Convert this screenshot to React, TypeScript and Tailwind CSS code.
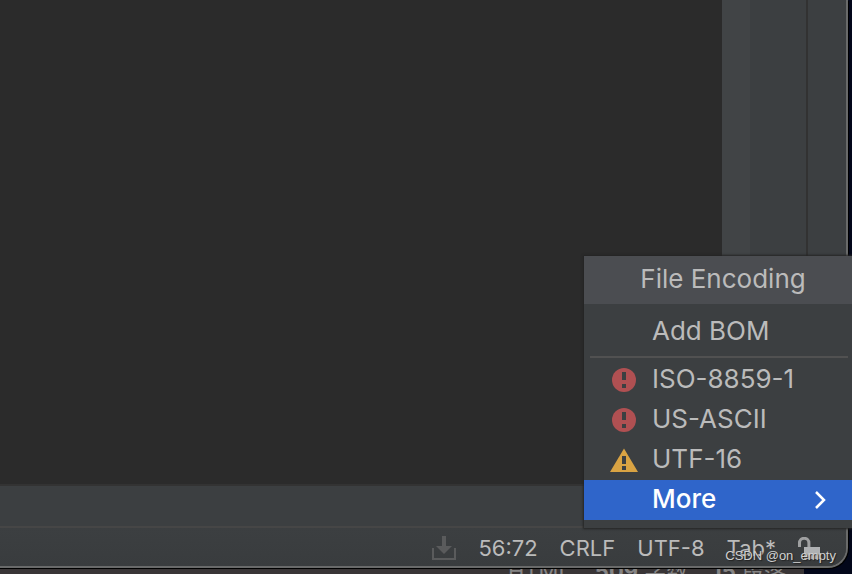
import React, { useState } from 'react';

interface Encoding {
  name: string;
  level: 'error' | 'warning';
}

const encodings: Encoding[] = [
  { name: 'ISO-8859-1', level: 'error' },
  { name: 'US-ASCII', level: 'error' },
  { name: 'UTF-16', level: 'warning' },
];

const ErrorIcon: React.FC = () => (
  <svg width="28" height="28" viewBox="0 0 28 28" aria-hidden="true">
    <circle cx="14" cy="14" r="12" fill="#b05052" />
    <path d="M12 6h4v8h-4zM12 18h4v4h-4z" fill="#3c3f41" />
  </svg>
);

const WarningIcon: React.FC = () => (
  <svg width="28" height="28" viewBox="0 0 28 28" aria-hidden="true">
    <path d="M14 2.5L28 26H0z" fill="#d9a343" />
    <path d="M12 10h4v8h-4zM12 20h4v4h-4z" fill="#3c3f41" />
  </svg>
);

const DownloadIcon: React.FC = () => (
  <svg width="24" height="24" viewBox="0 0 24 24" aria-hidden="true">
    <path d="M1 12v11h22V12" fill="none" stroke="#5a5b5c" strokeWidth="2" />
    <path d="M10 0h4v10h6l-8 8-8-8h6z" fill="#5a5b5c" />
  </svg>
);

const UnlockIcon: React.FC = () => (
  <svg width="22" height="22" viewBox="0 0 22 22" aria-hidden="true">
    <path d="M1.5 10V6a4.7 4.7 0 0 1 9.4 0v5" fill="none" stroke="#9fa0a1" strokeWidth="3" />
    <path d="M6 10h16v12H6z" fill="#afb1b3" />
  </svg>
);

const App: React.FC = () => {
  const [selected, setSelected] = useState('More');

  const rowClass = (name: string) =>
    `flex h-10 w-full items-center pl-[26px] pr-[25px] text-left ${
      selected === name ? 'bg-[#2f65ca] text-white font-medium' : 'text-[#bbbbbb]'
    }`;

  return (
    <div className="relative flex h-screen flex-col overflow-hidden bg-[#03071a] font-['Inter','Noto_Sans_CJK_SC',sans-serif] text-[#bbbbbb]">
      <main className="mr-1 flex min-h-0 flex-1 flex-col overflow-hidden rounded-br-[20px] border-b-2 border-r-2 border-[#696a6a] bg-[#3c3f41] shadow-[1px_1px_0_#000]">
        <div className="flex min-h-0 flex-1 border-b-2 border-[#333333]">
          <div className="flex-1 bg-[#2b2b2b]" />
          <div className="w-7 bg-[#414446]" />
          <div className="w-14 bg-[#3c3f41]" />
          <div className="w-10 border-l-2 border-[#323232]" />
        </div>
        <div className="h-10 bg-[#3c3f41]" />
        <footer className="flex h-10 items-center justify-end gap-[22px] border-t-2 border-[#464646] bg-linear-to-b from-[#3c3f41] to-[#393c3e] pr-[26px] pt-0.5 text-[22px] leading-7">
          <button aria-label="Background tasks"><DownloadIcon /></button>
          <button>56:72</button>
          <button>CRLF</button>
          <button>UTF-8</button>
          <button>Tab*</button>
          <button aria-label="Make file read-only"><UnlockIcon /></button>
        </footer>
      </main>

      <div className="mr-12 flex h-1.5 items-center justify-end gap-6 overflow-hidden border-t border-black bg-[#393536] pr-[18px] text-[22px] text-[#858484]">
        <span>HTML</span>
        <span><b>509</b> 字数</span>
        <span><b>15</b> 段落</span>
      </div>

      <div role="menu" className="absolute bottom-[46px] right-0 w-[268px] bg-[#3c3f41] pb-2 text-[26px] leading-8 shadow-[0_0_2px_1px_#242424]">
        <h2 className="flex h-12 items-center justify-center bg-[#4b4d51] pb-0.5 pl-2.5">File Encoding</h2>
        <button role="menuitem" onClick={() => setSelected('Add BOM')} className="flex h-[52px] w-full items-center pl-[68px] pt-0.5">
          Add BOM
        </button>
        <hr className="mb-0.5 ml-1.5 mr-1 border-t-2 border-[#515151]" />
        {encodings.map(e => (
          <button key={e.name} role="menuitem" onClick={() => setSelected(e.name)} className={rowClass(e.name)}>
            <span className="mr-3.5 w-7 shrink-0">{e.level === 'error' ? <ErrorIcon /> : <WarningIcon />}</span>
            <span className="pb-0.5">{e.name}</span>
          </button>
        ))}
        <button role="menuitem" onClick={() => setSelected('More')} className={rowClass('More')}>
          <span className="flex-1 pb-0.5 pl-[42px]">More</span>
          <svg width="14" height="18" viewBox="0 0 14 18" aria-hidden="true">
            <path d="M3 1l8 8-8 8" fill="none" stroke="currentColor" strokeWidth="2.5" />
          </svg>
        </button>
      </div>

      <span className="absolute bottom-2 right-4 font-['Liberation_Sans','Noto_Sans_CJK_SC',sans-serif] text-[13px] leading-5 text-[#d0d0d0] [text-shadow:1px_1px_1px_#222]">
        CSDN @on_empty
      </span>
    </div>
  );
};

export default App;
